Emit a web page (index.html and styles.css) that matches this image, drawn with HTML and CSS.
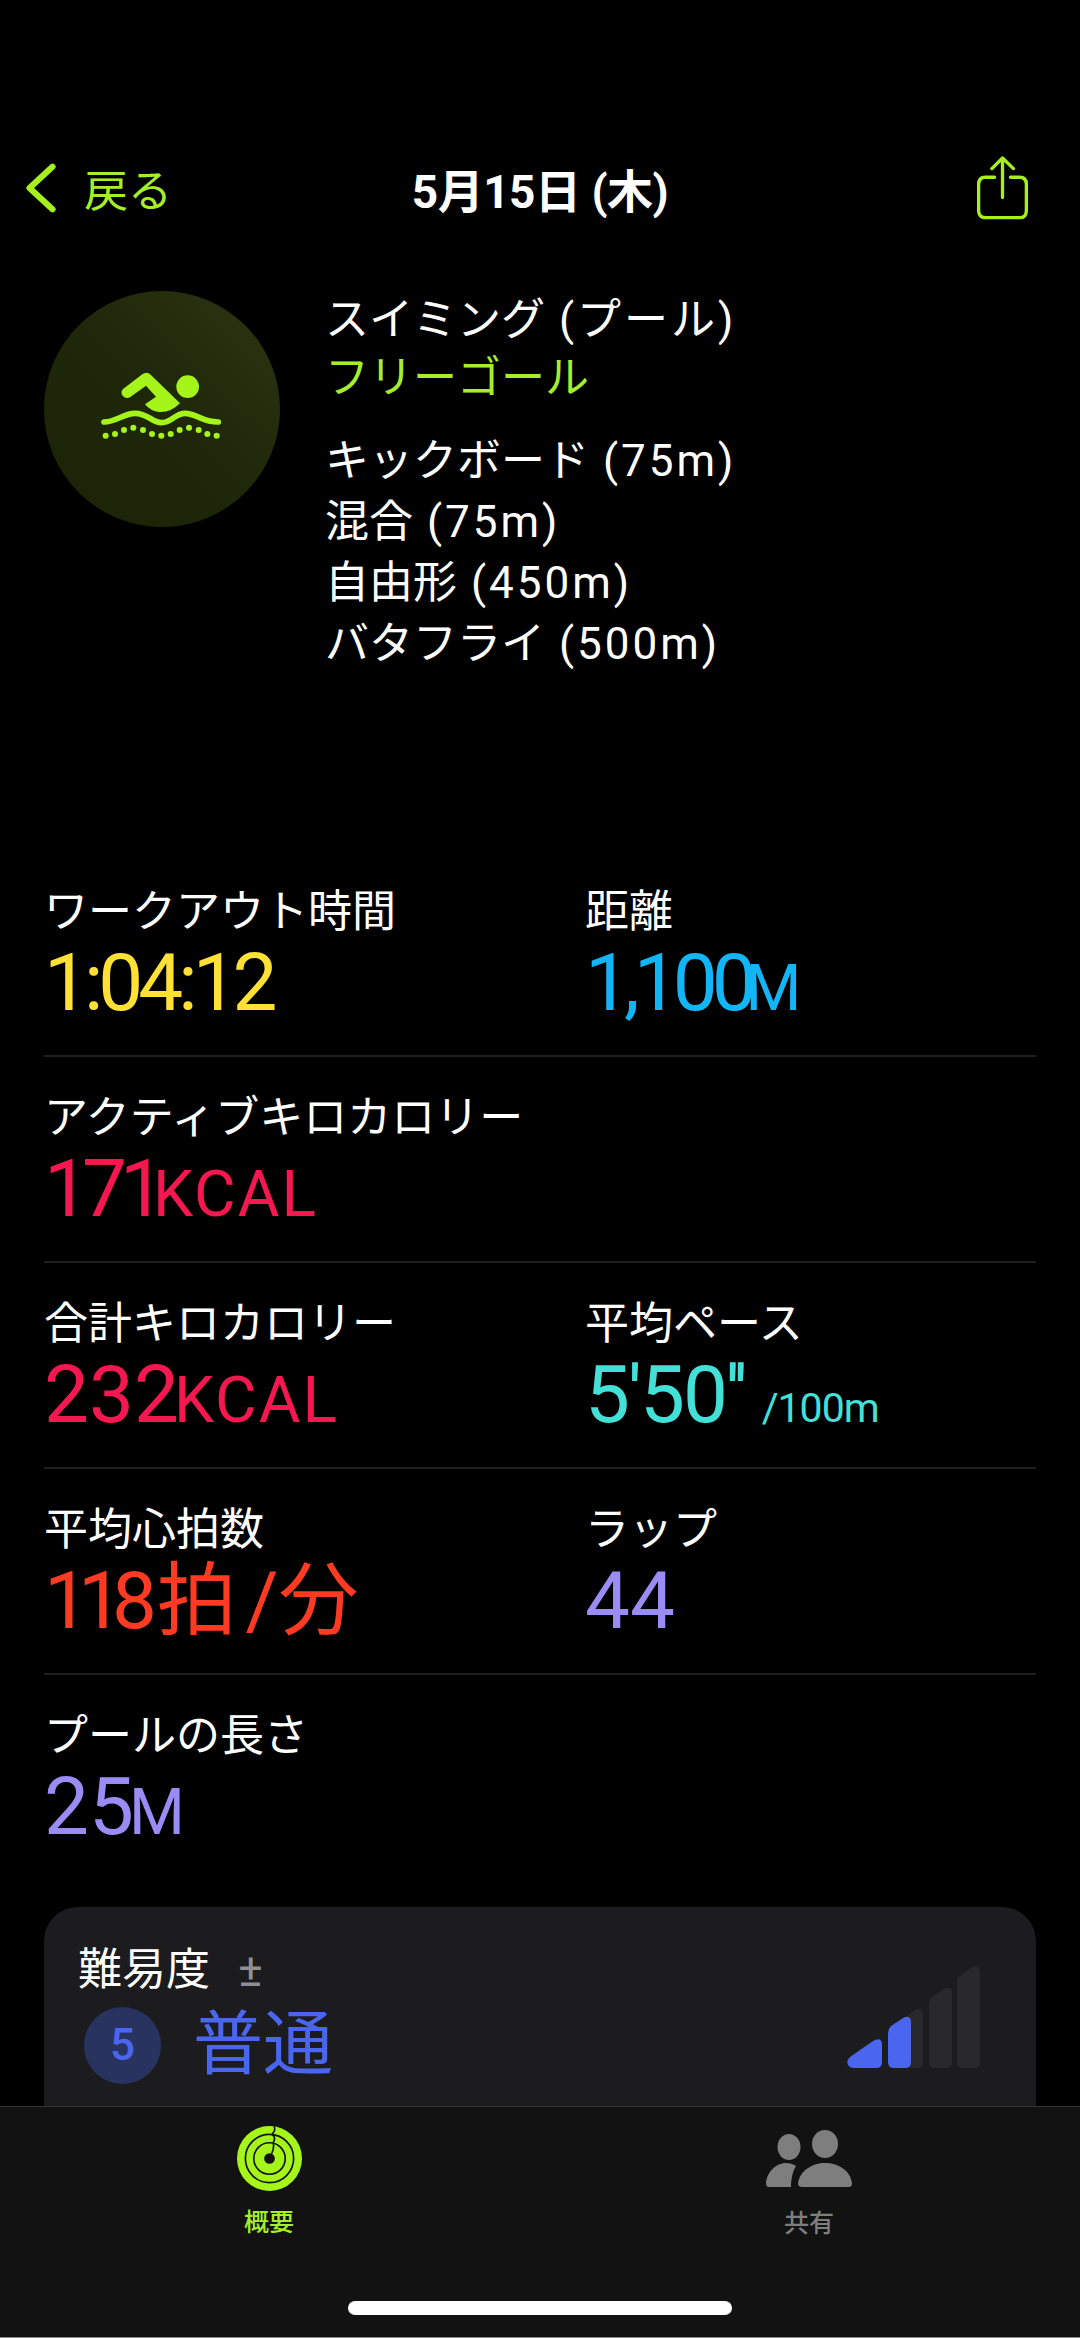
FILE: index.html
```html
<!DOCTYPE html>
<html lang="ja">
<head>
<meta charset="utf-8">
<title>5月15日 (木)</title>
<link rel="stylesheet" href="styles.css">
</head>
<body>
<div class="screen">
  <main class="content">
    <header class="nav">
      <a class="back">
        <svg class="chevron" viewBox="0 0 34 56"><path d="M30 4 4 28l26 24"/></svg>
        <span>戻る</span>
      </a>
      <h1 class="title">5月15日 (木)</h1>
      <svg class="share" viewBox="75 50 158 193">
        <path d="M154 175V57M122 88l32-32 33 32M130 114h-28q-20 0-20 22v78q0 22 22 22h102q20 0 20-22v-78q0-22-20-22h-28"/>
      </svg>
    </header>

    <section class="workout">
      <div class="badge">
        <svg viewBox="72 65 708 708">
          <path class="swim" d="M310 358 367 315Q380 305 392 316L480 402Q452 430 418 428 392 426 375 405L408 382 378 349 331 383Q318 391 308 379 300 367 310 358Z"/>
          <circle class="swim" cx="503" cy="352" r="34"/>
          <path class="wave" d="M252 458C290 458 310 432 345 432 385 432 395 460 425 460 455 460 465 432 495 432 530 432 545 458 595 458"/>
          <g class="swim">
            <circle cx="257" cy="499" r="9"/><circle cx="285" cy="494" r="9"/><circle cx="312" cy="482" r="9"/>
            <circle cx="340" cy="475" r="9"/><circle cx="369" cy="482" r="9"/><circle cx="396" cy="494" r="9"/>
            <circle cx="424" cy="499" r="9"/><circle cx="452" cy="494" r="9"/><circle cx="479" cy="482" r="9"/>
            <circle cx="507" cy="475" r="9"/><circle cx="536" cy="482" r="9"/><circle cx="562" cy="494" r="9"/>
            <circle cx="590" cy="499" r="9"/>
          </g>
        </svg>
      </div>
      <div class="details">
        <p class="activity">スイミング<span class="en"> (プール)</span></p>
        <p class="goal">フリーゴール</p>
        <ul class="strokes">
          <li>キックボード<span class="en"> (75m)</span></li>
          <li>混合<span class="en"> (75m)</span></li>
          <li>自由形<span class="en"> (450m)</span></li>
          <li>バタフライ<span class="en"> (500m)</span></li>
        </ul>
      </div>
    </section>

    <section class="metrics">
      <div class="row">
        <div class="metric"><div class="label">ワークアウト時間</div><div class="value yellow">1:04:12</div></div>
        <div class="metric"><div class="label">距離</div><div class="value blue">1,100<span class="unit">M</span></div></div>
      </div>
      <div class="row">
        <div class="metric"><div class="label">アクティブキロカロリー</div><div class="value pink tight">171<span class="unit">KCAL</span></div></div>
      </div>
      <div class="row">
        <div class="metric"><div class="label">合計キロカロリー</div><div class="value pink wider">232<span class="unit">KCAL</span></div></div>
        <div class="metric"><div class="label">平均ペース</div><div class="value teal wide">5'50''<span class="pace">/100m</span></div></div>
      </div>
      <div class="row">
        <div class="metric"><div class="label">平均心拍数</div><div class="value red tighter">118 <span class="cjk">拍</span> / <span class="cjk">分</span></div></div>
        <div class="metric"><div class="label">ラップ</div><div class="value purple wider">44</div></div>
      </div>
      <div class="row last">
        <div class="metric"><div class="label">プールの長さ</div><div class="value purple wider">25<span class="unit">M</span></div></div>
      </div>
    </section>

    <section class="card">
      <div class="card-head"><span>難易度</span><span class="plusminus">±</span></div>
      <div class="card-body">
        <div class="level">
          <span class="level-num">5</span>
          <span class="level-name">普通</span>
        </div>
        <svg class="bars" viewBox="0 0 133 102">
          <path class="bar-off" d="M110 16Q110 12 113 10L125 1Q133-2 133 7V96Q133 102 127 102H116Q110 102 110 96Z"/>
          <path class="bar-off" d="M82 37Q82 33 85 31L97 23Q105 19 105 28V96Q105 102 99 102H88Q82 102 82 96Z"/>
          <path class="bar-off" d="M53 59Q53 55 56 53L68 44Q76 41 76 50V96Q76 102 70 102H59Q53 102 53 96Z"/>
          <path class="bar-on" d="M41 67Q41 63 44 60L56 52Q64 48 64 57V96Q64 102 58 102H47Q41 102 41 96Z"/>
          <path class="bar-on" d="M3 91 26 75Q35 70 35 79V96Q35 102 29 102H7Q3 102 1 99-1 95 3 91Z"/>
        </svg>
      </div>
    </section>
  </main>

  <nav class="tabbar">
    <div class="tabs">
      <div class="tab active">
        <svg class="tab-rings" viewBox="110 79 194 194">
          <circle class="ring-fill" cx="207" cy="176" r="97"/>
          <circle class="ring-line" cx="207" cy="176" r="72"/>
          <circle class="ring-line" cx="207" cy="176" r="47"/>
          <circle class="ring-hole" cx="207" cy="176" r="16"/>
          <path class="ring-line" d="M221 79Q225 92 219 98 213 104 218 108M218 106Q226 118 218 128M218 130Q222 145 213 162"/>
        </svg>
        <span class="tab-label">概要</span>
      </div>
      <div class="tab">
        <svg class="tab-people" viewBox="0 0 86 57">
          <ellipse cx="59" cy="14" rx="13" ry="14"/>
          <path d="M36 57Q32 57 32 53C34 40 47 33 59 33 72 33 84 40 86 53 86 56 85 57 82 57Z"/>
          <ellipse cx="23" cy="17" rx="11.5" ry="13"/>
          <path d="M3 57Q0 57 0 53C1 42 10 33 20 33 24 33 27 34 30 36 27 41 25 48 25 57Z"/>
        </svg>
        <span class="tab-label">共有</span>
      </div>
    </div>
    <div class="home-indicator"></div>
  </nav>
</div>
</body>
</html>
```
FILE: styles.css
```css
* { box-sizing: border-box; margin: 0; padding: 0; }
html, body { background: #000; }
body {
  font-family: Roboto, "Noto Sans CJK JP", sans-serif;
  color: #fff;
  width: 1080px;
  height: 2338px;
  overflow: hidden;
}
.screen { display: flex; flex-direction: column; height: 2338px; }
.content { flex: 1; min-height: 0; overflow: hidden; }

.nav {
  display: grid;
  grid-template-columns: 1fr auto 1fr;
  align-items: center;
  height: 70px;
  margin-top: 153px;
  padding: 0 26px;
}
.back { display: flex; align-items: center; gap: 28px; color: #a6ee2a; font-size: 44px; }
.chevron { width: 30px; height: 52px; fill: none; stroke: #a6f01e; stroke-width: 7; stroke-linecap: round; stroke-linejoin: round; }
.title { font-size: 46px; font-weight: 700; letter-spacing: -0.5px; }
.share { justify-self: end; width: 53px; height: 64px; margin-right: 25px; fill: none; stroke: #a6f01e; stroke-width: 10; stroke-linecap: round; stroke-linejoin: round; }

.workout { display: flex; align-items: flex-start; gap: 45px; margin-top: 68px; padding-left: 44px; }
.badge {
  width: 236px;
  height: 236px;
  border-radius: 50%;
  flex: none;
  background: linear-gradient(45deg, #1a2307, #1e2809 50%, #2c3612);
}
.badge svg { display: block; width: 236px; height: 236px; }
.swim { fill: #a6f51a; }
.wave { fill: none; stroke: #a6f51a; stroke-width: 17; stroke-linecap: round; }
.details { font-size: 44px; line-height: 61px; margin-top: -1px; }
.details p { white-space: nowrap; }
.activity { margin-bottom: -3px; }
.en { letter-spacing: 3px; }
.goal { color: #a6ee2a; }
.strokes { list-style: none; margin-top: 22px; }

.metrics { margin: 176px 44px 0; }
.row {
  display: grid;
  grid-template-columns: 541px 1fr;
  height: 206px;
  padding-top: 30px;
  border-bottom: 2px solid #1f1f1f;
}
.row.last { border-bottom: 0; }
.label { font-size: 44px; line-height: 62px; white-space: nowrap; }
.value { font-size: 80px; line-height: 80px; letter-spacing: -5px; white-space: nowrap; }
.value.tight { letter-spacing: -7px; }
.value.tighter { letter-spacing: -11px; }
.value.wide { letter-spacing: -2px; }
.value.wider { letter-spacing: 0; }
.blue.value { letter-spacing: -6px; }
.unit { font-size: 64px; letter-spacing: 2px; margin-left: -5px; }
.pace { font-size: 41px; letter-spacing: -1px; margin-left: 16px; }
.cjk { font-size: 80px; letter-spacing: 0; margin-left: 2px; }
.yellow { color: #ffe136; }
.blue { color: #12b5f5; }
.pink { color: #f5174f; }
.teal { color: #43e0d8; }
.red { color: #ff3a22; }
.purple { color: #9a8cf5; }

.card {
  margin: 26px 44px 0;
  height: 260px;
  padding: 33px 34px 0;
  background: #1c1c1e;
  border-radius: 34px;
}
.card-head { display: flex; align-items: center; gap: 28px; font-size: 44px; line-height: 60px; }
.plusminus { color: #8e8e93; font-size: 46px; }
.card-body { display: flex; justify-content: space-between; align-items: center; height: 90px; padding-right: 22px; }
.level { display: flex; align-items: center; gap: 32px; margin-left: 6px; }
.level-num {
  width: 77px;
  height: 77px;
  border-radius: 50%;
  display: flex;
  align-items: center;
  justify-content: center;
  background: #28345f;
  color: #4a66ee;
  font-size: 44px;
  font-weight: 500;
}
.level-name { color: #4a66ee; font-size: 70px; line-height: 90px; }
.bars { align-self: flex-end; width: 133px; height: 102px; display: block; margin-bottom: 22px; flex: none; }
.bar-off { fill: #29292d; }
.bar-on { fill: #4a66ee; }

.tabbar {
  height: 232px;
  flex: none;
  background: #121212;
  border-top: 1px solid #353535;
  border-bottom: 1px solid #8a8a8a;
}
.tabs { display: grid; grid-template-columns: 538px 542px; height: 194px; }
.tab { display: flex; flex-direction: column; align-items: center; color: #7e7e7e; height: 194px; }
.tab.active { color: #a6ee2a; }
.tab-rings { width: 65px; height: 65px; margin-top: 19px; }
.ring-fill { fill: #a6f51a; }
.ring-line { fill: none; stroke: #121212; stroke-width: 5; }
.ring-hole { fill: #121212; }
.tab-people { width: 86px; height: 57px; margin-top: 23px; fill: #7e7e7e; }
.tab-label { font-size: 25px; font-weight: 500; line-height: 36px; }
.tab-rings + .tab-label { margin-top: 14px; }
.tab-people + .tab-label { margin-top: 19px; }
.home-indicator { width: 384px; height: 14px; margin: 0 auto; background: #fff; border-radius: 7px; }
```
